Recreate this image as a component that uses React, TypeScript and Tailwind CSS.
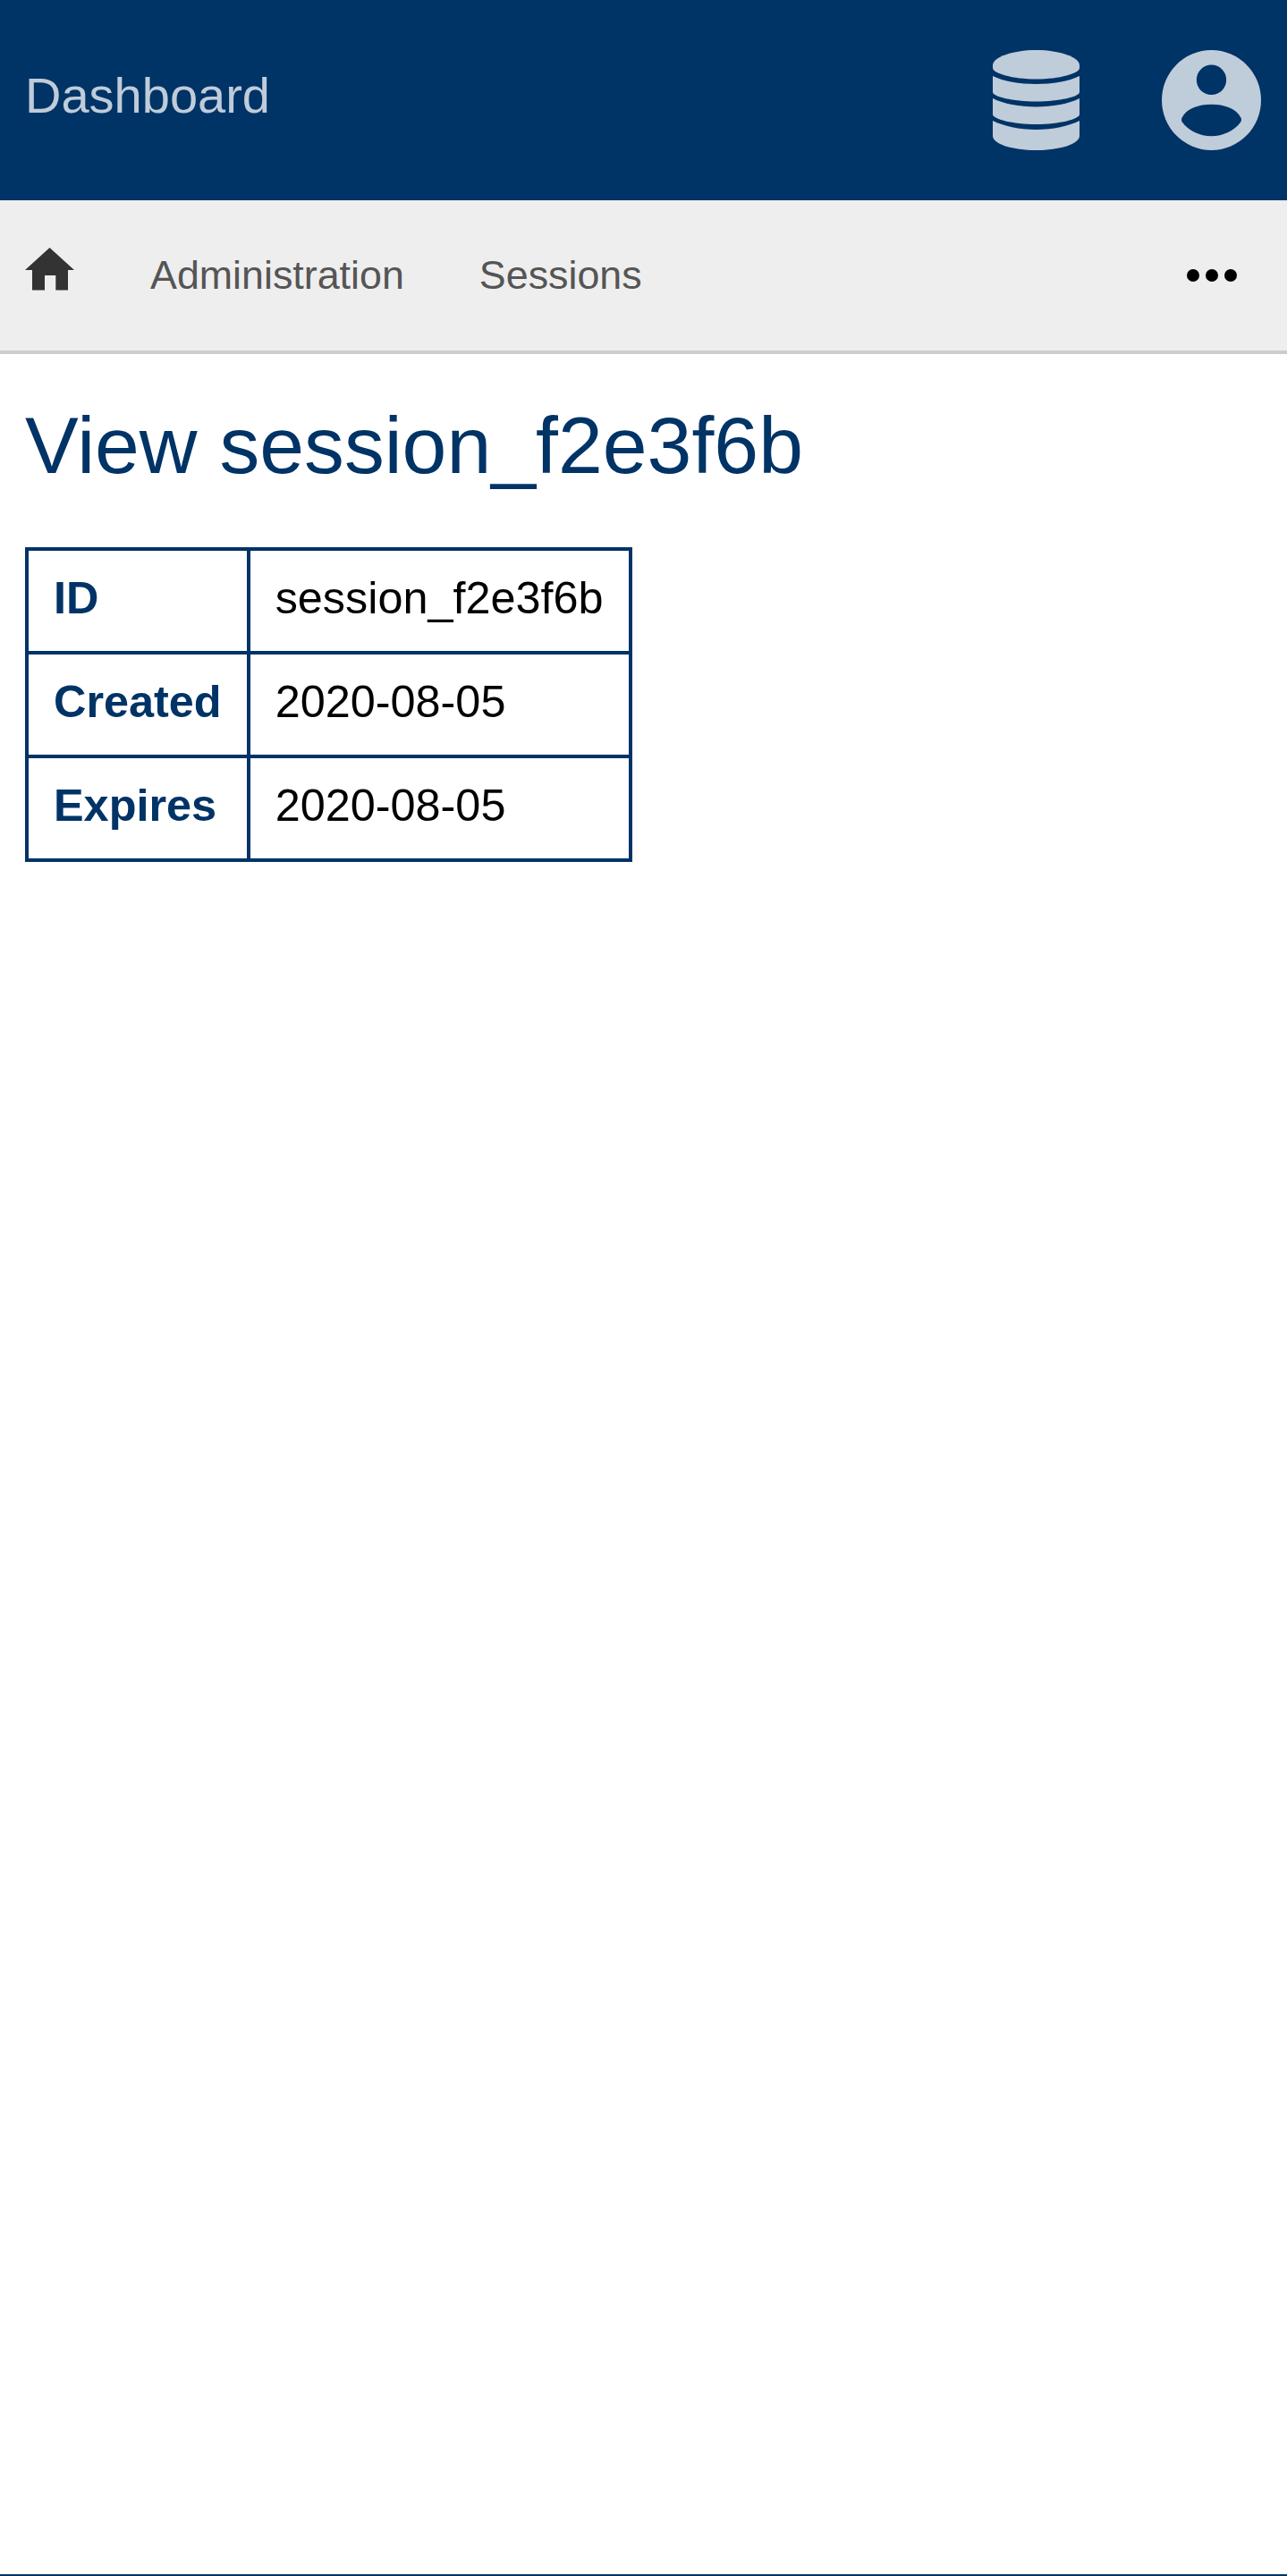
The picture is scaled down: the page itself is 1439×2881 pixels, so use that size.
const rows = [
  { label: "ID", value: "session_f2e3f6b" },
  { label: "Created", value: "2020-08-05" },
  { label: "Expires", value: "2020-08-05" },
];

function DatabaseIcon() {
  return (
    <svg width="97" height="112" viewBox="0 0 97 112" fill="currentColor">
      <path d="M0 17C0 8 22 0 48.5 0S97 8 97 17V20C97 26 75 32.5 48.5 32.5S0 26 0 20Z" />
      <path d="M0 29C12 35 30 38 48.5 38S85 35 97 29V47C97 52 75 57.5 48.5 57.5S0 52 0 47Z" />
      <path d="M0 54C12 60 30 63.5 48.5 63.5S85 60 97 54V72C97 77 75 83 48.5 83S0 77 0 72Z" />
      <path d="M0 79C12 85 30 89 48.5 89S85 85 97 79V96C97 105 75 112 48.5 112S0 105 0 96Z" />
    </svg>
  );
}

function AccountIcon() {
  return (
    <svg width="111" height="112" viewBox="0 0 112 112" preserveAspectRatio="none" fill="currentColor">
      <path
        fillRule="evenodd"
        d="M56 0A56 56 0 1 1 56 112A56 56 0 1 1 56 0ZM56 16.500A16.800 16.800 0 1 0 56 50.100A16.800 16.800 0 1 0 56 16.500ZM56 60.700C42 60.700 28 65 22.800 75.500C22 77 22 79 23 80.500C30 90 43 96.300 56 96.300C69 96.300 82 90 89 80.500C90 79 90 77 89.200 75.500C84 65 70 60.700 56 60.700Z"
      />
    </svg>
  );
}

function HomeIcon() {
  return (
    <svg width="55" height="48" viewBox="0 0 55 48" fill="#333333">
      <path d="M27.500 0L55 25H48V47.500H34.300V31H22V47.500H8V25H0Z" />
    </svg>
  );
}

export default function App() {
  return (
    <div className="min-h-screen flex flex-col bg-white font-['Liberation_Sans',Arial,sans-serif]">
      <header className="h-[224px] flex items-center justify-between pl-[28px] pr-[29px] bg-[#003366] text-[#bfccd9]">
        <a className="mb-[10px] text-[56px] leading-none">Dashboard</a>
        <div className="flex items-center gap-[92px]">
          <DatabaseIcon />
          <AccountIcon />
        </div>
      </header>
      <nav className="h-[172px] flex items-center justify-between pl-[28px] pr-[56px] bg-[#eeeeee] border-b-[4px] border-[#cccccc]">
        <div className="flex items-center">
          <span className="mb-[14px]">
            <HomeIcon />
          </span>
          <a className="ml-[85px] mb-[2px] text-[44.8px] leading-none text-[#555555]">Administration</a>
          <a className="ml-[84px] mb-[2px] text-[44.8px] leading-none text-[#555555]">Sessions</a>
        </div>
        <div className="flex items-center gap-[7px]">
          <span className="w-[14px] h-[14px] rounded-full bg-black" />
          <span className="w-[14px] h-[14px] rounded-full bg-black" />
          <span className="w-[14px] h-[14px] rounded-full bg-black" />
        </div>
      </nav>
      <main className="flex-1 px-[28px]">
        <h1 className="mt-[49px] mb-[61px] text-[89.6px] leading-[106px] font-normal text-[#003366]">
          View session_f2e3f6b
        </h1>
        <table className="border-collapse border-[4px] border-[#003366] text-[50.4px] leading-[56px]">
          <tbody>
            {rows.map((row) => (
              <tr key={row.label}>
                <th className="border-[4px] border-[#003366] px-[28px] pt-[25px] pb-[31px] text-left font-bold text-[#003366]">
                  {row.label}
                </th>
                <td className="border-[4px] border-[#003366] px-[28px] pt-[25px] pb-[31px] text-black">{row.value}</td>
              </tr>
            ))}
          </tbody>
        </table>
      </main>
      <footer className="border-t-[2px] border-[#003366]" />
    </div>
  );
}
